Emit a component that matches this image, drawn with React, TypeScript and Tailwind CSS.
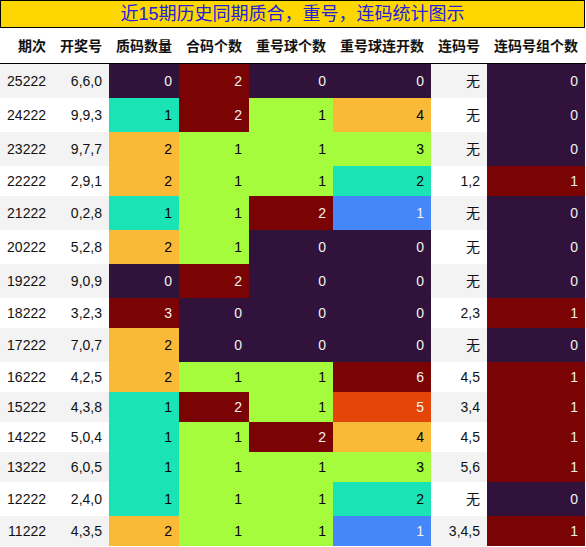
import React from 'react'

// turbo-like palette used for the gradient cells
const C = {
  p: 'bg-[#30123b] text-[#f1f1f1]',
  b: 'bg-[#4686fb] text-[#f1f1f1]',
  t: 'bg-[#1ae4b6] text-black',
  g: 'bg-[#a4fc3c] text-black',
  o: 'bg-[#fbb938] text-black',
  r: 'bg-[#e4460a] text-[#f1f1f1]',
  d: 'bg-[#7a0403] text-[#f1f1f1]',
}

const col3 = [C.p, C.t, C.o, C.d]
const col4 = [C.p, C.g, C.d]
const col6 = [C.p, C.b, C.t, C.g, C.o, C.r, C.d]
const col8 = [C.p, C.d]

const rows: [string, string, number, number, number, number, string, number][] = [
  ['25222', '6,6,0', 0, 2, 0, 0, '无', 0],
  ['24222', '9,9,3', 1, 2, 1, 4, '无', 0],
  ['23222', '9,7,7', 2, 1, 1, 3, '无', 0],
  ['22222', '2,9,1', 2, 1, 1, 2, '1,2', 1],
  ['21222', '0,2,8', 1, 1, 2, 1, '无', 0],
  ['20222', '5,2,8', 2, 1, 0, 0, '无', 0],
  ['19222', '9,0,9', 0, 2, 0, 0, '无', 0],
  ['18222', '3,2,3', 3, 0, 0, 0, '2,3', 1],
  ['17222', '7,0,7', 2, 0, 0, 0, '无', 0],
  ['16222', '4,2,5', 2, 1, 1, 6, '4,5', 1],
  ['15222', '4,3,8', 1, 2, 1, 5, '3,4', 1],
  ['14222', '5,0,4', 1, 1, 2, 4, '4,5', 1],
  ['13222', '6,0,5', 1, 1, 1, 3, '5,6', 1],
  ['12222', '2,4,0', 1, 1, 1, 2, '无', 0],
  ['11222', '4,3,5', 2, 1, 1, 1, '3,4,5', 1],
]

const headers = ['期次', '开奖号', '质码数量', '合码个数', '重号球个数', '重号球连开数', '连码号', '连码号组个数']

const grid = 'grid grid-cols-[53px_56px_70px_70px_84px_98px_56px_98px]'
const cell = 'flex items-center justify-end px-[7px] whitespace-nowrap'

export default function App() {
  return (
    <div className="w-[586px] h-[547px] overflow-hidden bg-white font-['Liberation_Sans','Noto_Sans_CJK_SC',sans-serif] text-[14px] leading-normal">
      <div className="w-[585px] h-[28px] border border-black bg-[#ffd700] flex items-center justify-center text-[18px] text-[#2222dd] pt-[1px]">
        近15期历史同期质合，重号，连码统计图示
      </div>

      <div className={`${grid} h-[36px] border-b border-black font-bold text-[#111]`}>
        {headers.map((h) => (
          <div key={h} className={`${cell} pt-[2px]`}>{h}</div>
        ))}
      </div>

      {rows.map((r, i) => {
        const base = i % 2 === 0 ? 'bg-[#f3f3f3]' : 'bg-white'
        const tall = r[6] === '无' ? 'h-[34px]' : 'h-[30px]'
        return (
          <div key={r[0]} className={`${grid} ${tall}`}>
            <div className={`${cell} ${base} text-[#111]`}>{r[0]}</div>
            <div className={`${cell} ${base} text-[#111]`}>{r[1]}</div>
            <div className={`${cell} ${col3[r[2]]}`}>{r[2]}</div>
            <div className={`${cell} ${col4[r[3]]}`}>{r[3]}</div>
            <div className={`${cell} ${col4[r[4]]}`}>{r[4]}</div>
            <div className={`${cell} ${col6[r[5]]}`}>{r[5]}</div>
            <div className={`${cell} ${base} text-[#111]`}>{r[6]}</div>
            <div className={`${cell} ${col8[r[7]]}`}>{r[7]}</div>
          </div>
        )
      })}
    </div>
  )
}
